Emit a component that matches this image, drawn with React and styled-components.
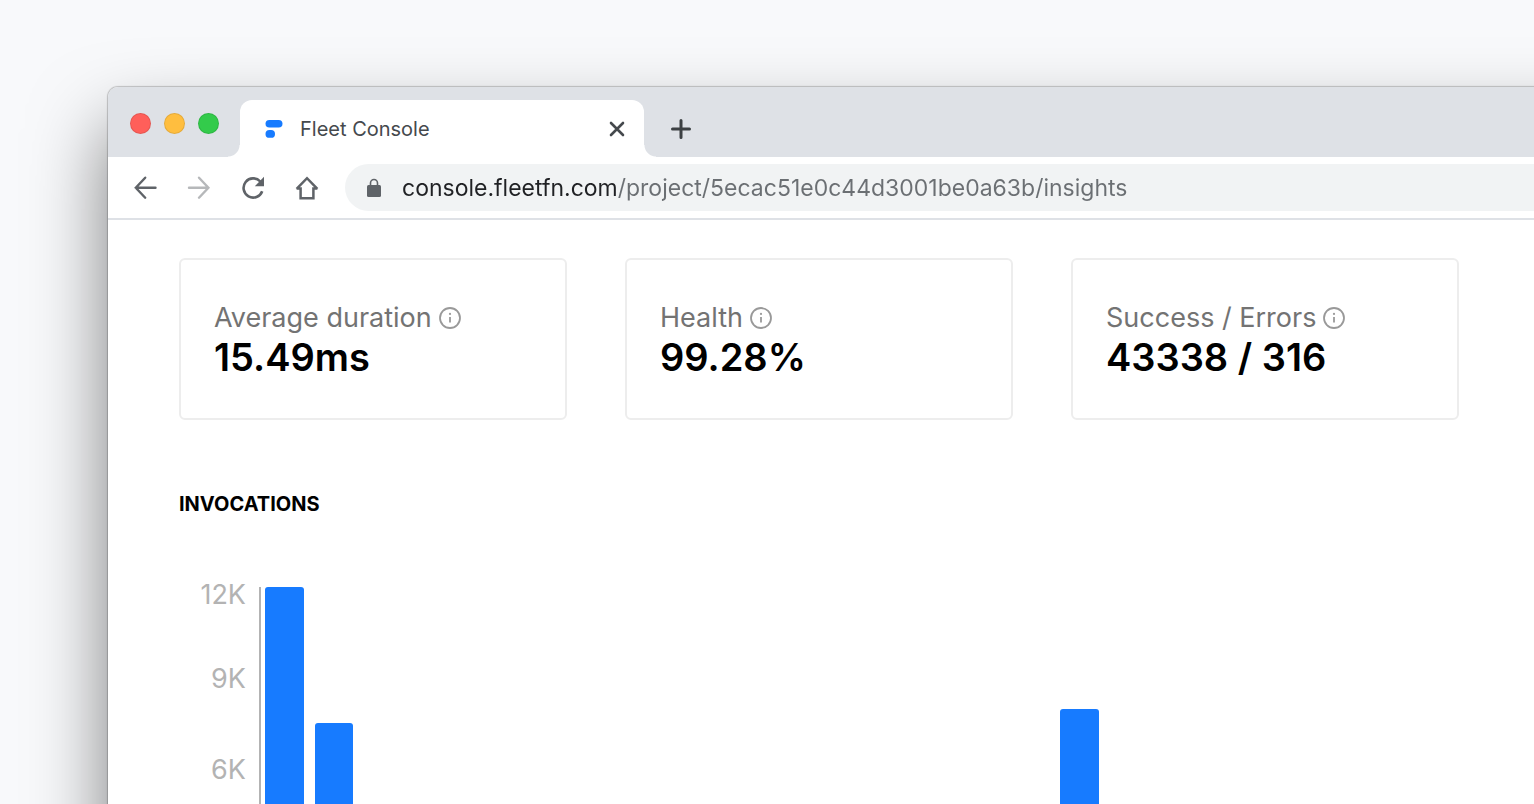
import React from 'react';
import styled, { createGlobalStyle } from 'styled-components';

const GlobalStyle = createGlobalStyle`
  * {
    box-sizing: border-box;
  }

  body {
    margin: 0;
    background: #f8f9fb;
    font-family: Inter, "Liberation Sans", sans-serif;
  }

  button {
    display: flex;
    padding: 0;
    border: none;
    background: none;
    color: inherit;
  }
`;

const Stage = styled.div`
  height: 100vh;
  padding: 87px 0 0 108px;
  overflow: hidden;
`;

// the window runs off the right edge, so its shadow never shows there
const Window = styled.div`
  margin-right: -160px;
  padding-right: 160px;
  background: #fff;
  border-radius: 10px 10px 0 0;
  box-shadow: 0 0 1px 1px rgba(0, 0, 0, 0.2), 0 40px 76px rgba(0, 0, 0, 0.5);
`;

const TabStrip = styled.header`
  display: flex;
  align-items: flex-end;
  height: 70px;
  margin-right: -160px;
  background: #dee1e6;
  border-radius: 10px 0 0 0;
`;

const Lights = styled.div`
  display: flex;
  align-self: center;
  gap: 13px;
  padding: 2px 9px 0 22px;
`;

const Light = styled.button`
  width: 21px;
  height: 21px;
  border: 1px solid rgba(0, 0, 0, 0.1);
  border-radius: 50%;
  background: ${props => props.$color};
`;

const Tab = styled.div`
  display: flex;
  align-items: center;
  width: 404px;
  height: 57px;
  padding: 0 16px 0 25px;
  border-radius: 12px 12px 0 0;
  background: #fff;
  color: #45494d;
`;

// little foot that curves the tab into the toolbar
const Foot = styled.span`
  width: 12px;
  height: 12px;
  background: radial-gradient(circle at ${props => props.$side} top, transparent 11px, #fff 12px);
`;

const TabTitle = styled.span`
  flex: 1;
  padding-left: 17px;
  font-size: 20px;
  line-height: 24px;
`;

const NewTab = styled.button`
  align-items: center;
  height: 57px;
  margin-left: 12px;
  color: #3c4043;
`;

const Toolbar = styled.nav`
  display: flex;
  align-items: center;
  height: 63px;
  margin-right: -160px;
  padding-left: 21px;
  border-bottom: 2px solid #dee1e6;
  color: #5f6368;
`;

const NavButton = styled.button`
  margin-right: 22px;
  opacity: ${props => (props.$dim ? 0.45 : 1)};
`;

const AddressBar = styled.label`
  display: flex;
  flex: 1;
  align-items: center;
  height: 47px;
  padding-left: 21px;
  border-radius: 24px 0 0 24px;
  background: #f1f3f4;
`;

// host is dark, path is grey
const Address = styled.input`
  flex: 1;
  min-width: 0;
  margin-left: 20px;
  padding: 0;
  border: none;
  outline: none;
  background: linear-gradient(to right, #202124 216px, #6b6f73 216px);
  background-clip: text;
  -webkit-text-fill-color: transparent;
  font-family: inherit;
  font-size: 23px;
  line-height: 32px;
`;

const Content = styled.main`
  padding: 38px 75px 60px 71px;
`;

const Cards = styled.section`
  display: grid;
  grid-template-columns: repeat(3, 1fr);
  gap: 58px;
`;

const Card = styled.article`
  padding: 42px 33px 38px;
  border: 2px solid #ededed;
  border-radius: 6px;
`;

const CardLabel = styled.h2`
  display: flex;
  align-items: center;
  gap: 6px;
  margin: 0;
  color: #737373;
  font-size: 27px;
  font-weight: 400;
  line-height: 32px;
`;

const CardValue = styled.p`
  margin: 0;
  color: #000;
  font-size: 38px;
  font-weight: 600;
  line-height: 46px;
`;

const SectionTitle = styled.h3`
  margin: 72px 0 71px;
  color: #000;
  font-size: 20px;
  font-weight: 700;
  line-height: 24px;
`;

const Chart = styled.div`
  display: flex;
  height: 365px;
`;

const Axis = styled.div`
  width: 82px;
  padding-right: 13px;
  border-right: 2px solid #b3b3b3;
`;

const Tick = styled.div`
  display: flex;
  align-items: center;
  justify-content: flex-end;
  height: 91px;
  color: #b3b3b3;
  font-size: 27px;
  line-height: 16px;

  &:first-child {
    align-items: flex-start;
    height: 46px;
  }
`;

const Bars = styled.div`
  display: grid;
  flex: 1;
  grid-template-columns: repeat(24, 1fr);
  align-items: end;
  gap: 11px;
  margin: 0 12px 0 4px;
`;

const Bar = styled.div`
  border-radius: 3px 3px 0 0;
  background: #177bff;
`;

const Logo = () => (
  <svg width="18" height="20" viewBox="0 0 18 20" fill="#177bff">
    <rect x="0.5" y="1" width="17" height="7.6" rx="3.8" />
    <rect x="0.5" y="11" width="9.5" height="7.8" rx="3.9" />
  </svg>
);

const Icon = ({ size = 32, stroke = 2.4, children }) => (
  <svg width={size} height={size} viewBox={`0 0 ${size} ${size}`} fill="none" stroke="currentColor" strokeWidth={stroke}>
    {children}
  </svg>
);

const InfoIcon = () => (
  <Icon size={24} stroke={1.8}>
    <circle cx="12" cy="12" r="10" stroke="#999" />
    <path d="M12 11v5.6" stroke="#999" />
    <circle cx="12" cy="7.9" r="1.1" fill="#999" stroke="none" />
  </Icon>
);

const stats = [
  { label: 'Average duration', value: '15.49ms' },
  { label: 'Health', value: '99.28%' },
  { label: 'Success / Errors', value: '43338 / 316' },
];

const MAX = 12000;
const ticks = ['12K', '9K', '6K'];
const invocations = [12000, 7530, 0, 0, 0, 0, 0, 0, 0, 0, 0, 0, 0, 0, 0, 0, 7990, 0, 0, 0, 0, 0, 0, 0];

const App = () => {
  return (
    <Stage>
      <GlobalStyle />
      <Window>
        <TabStrip>
          <Lights>
            <Light $color="#ff5f5a" aria-label="Close window" />
            <Light $color="#ffbe3f" aria-label="Minimize window" />
            <Light $color="#33cb4b" aria-label="Zoom window" />
          </Lights>
          <Foot $side="left" />
          <Tab>
            <Logo />
            <TabTitle>Fleet Console</TabTitle>
            <button aria-label="Close tab">
              <Icon size={22} stroke={2.6}>
                <path d="M5 5l12 12M17 5L5 17" strokeLinecap="round" />
              </Icon>
            </button>
          </Tab>
          <Foot $side="right" />
          <NewTab aria-label="New tab">
            <Icon size={26} stroke={3}>
              <path d="M13 4.5v17M4.5 13h17" strokeLinecap="round" />
            </Icon>
          </NewTab>
        </TabStrip>
        <Toolbar>
          <NavButton aria-label="Back">
            <Icon>
              <path d="M26.500 15.700H7M16.200 5.700L6.800 15.700l9.400 10" strokeLinecap="round" />
            </Icon>
          </NavButton>
          <NavButton aria-label="Forward" $dim>
            <Icon>
              <path d="M6 15.700h19M16 5.700l9.400 10-9.400 10" strokeLinecap="round" />
            </Icon>
          </NavButton>
          <NavButton aria-label="Reload">
            <Icon stroke={2.6}>
              <path d="M25.200 19.200a9.600 9.600 0 1 1-1.900-9.700" />
              <path d="M27 4.800v9.400h-9.200z" fill="currentColor" stroke="none" />
            </Icon>
          </NavButton>
          <NavButton aria-label="Home">
            <Icon stroke={2.5}>
              <path d="M5.600 16.800L16 6.200l10.400 10.600M5.600 16.600h4v9.600h12.800v-9.600h4" />
            </Icon>
          </NavButton>
          <AddressBar>
            <svg width="16" height="20" viewBox="0 0 16 20">
              <rect x="1" y="7" width="14" height="12" rx="1.5" fill="#5f6368" />
              <path d="M4.500 8V5a3.500 3.500 0 0 1 7 0v3" fill="none" stroke="#5f6368" strokeWidth="1.6" />
            </svg>
            <Address
              aria-label="Address"
              defaultValue="console.fleetfn.com/project/5ecac51e0c44d3001be0a63b/insights"
            />
          </AddressBar>
        </Toolbar>
        <Content>
          <Cards>
            {stats.map(stat => (
              <Card key={stat.label}>
                <CardLabel>
                  {stat.label}
                  <InfoIcon />
                </CardLabel>
                <CardValue>{stat.value}</CardValue>
              </Card>
            ))}
          </Cards>
          <SectionTitle>INVOCATIONS</SectionTitle>
          <Chart>
            <Axis>
              {ticks.map(tick => (
                <Tick key={tick}>{tick}</Tick>
              ))}
            </Axis>
            <Bars>
              {invocations.map((count, hour) => (
                <Bar key={hour} style={{ height: (count / MAX) * 365 }} />
              ))}
            </Bars>
          </Chart>
        </Content>
      </Window>
    </Stage>
  );
};

export default App;
